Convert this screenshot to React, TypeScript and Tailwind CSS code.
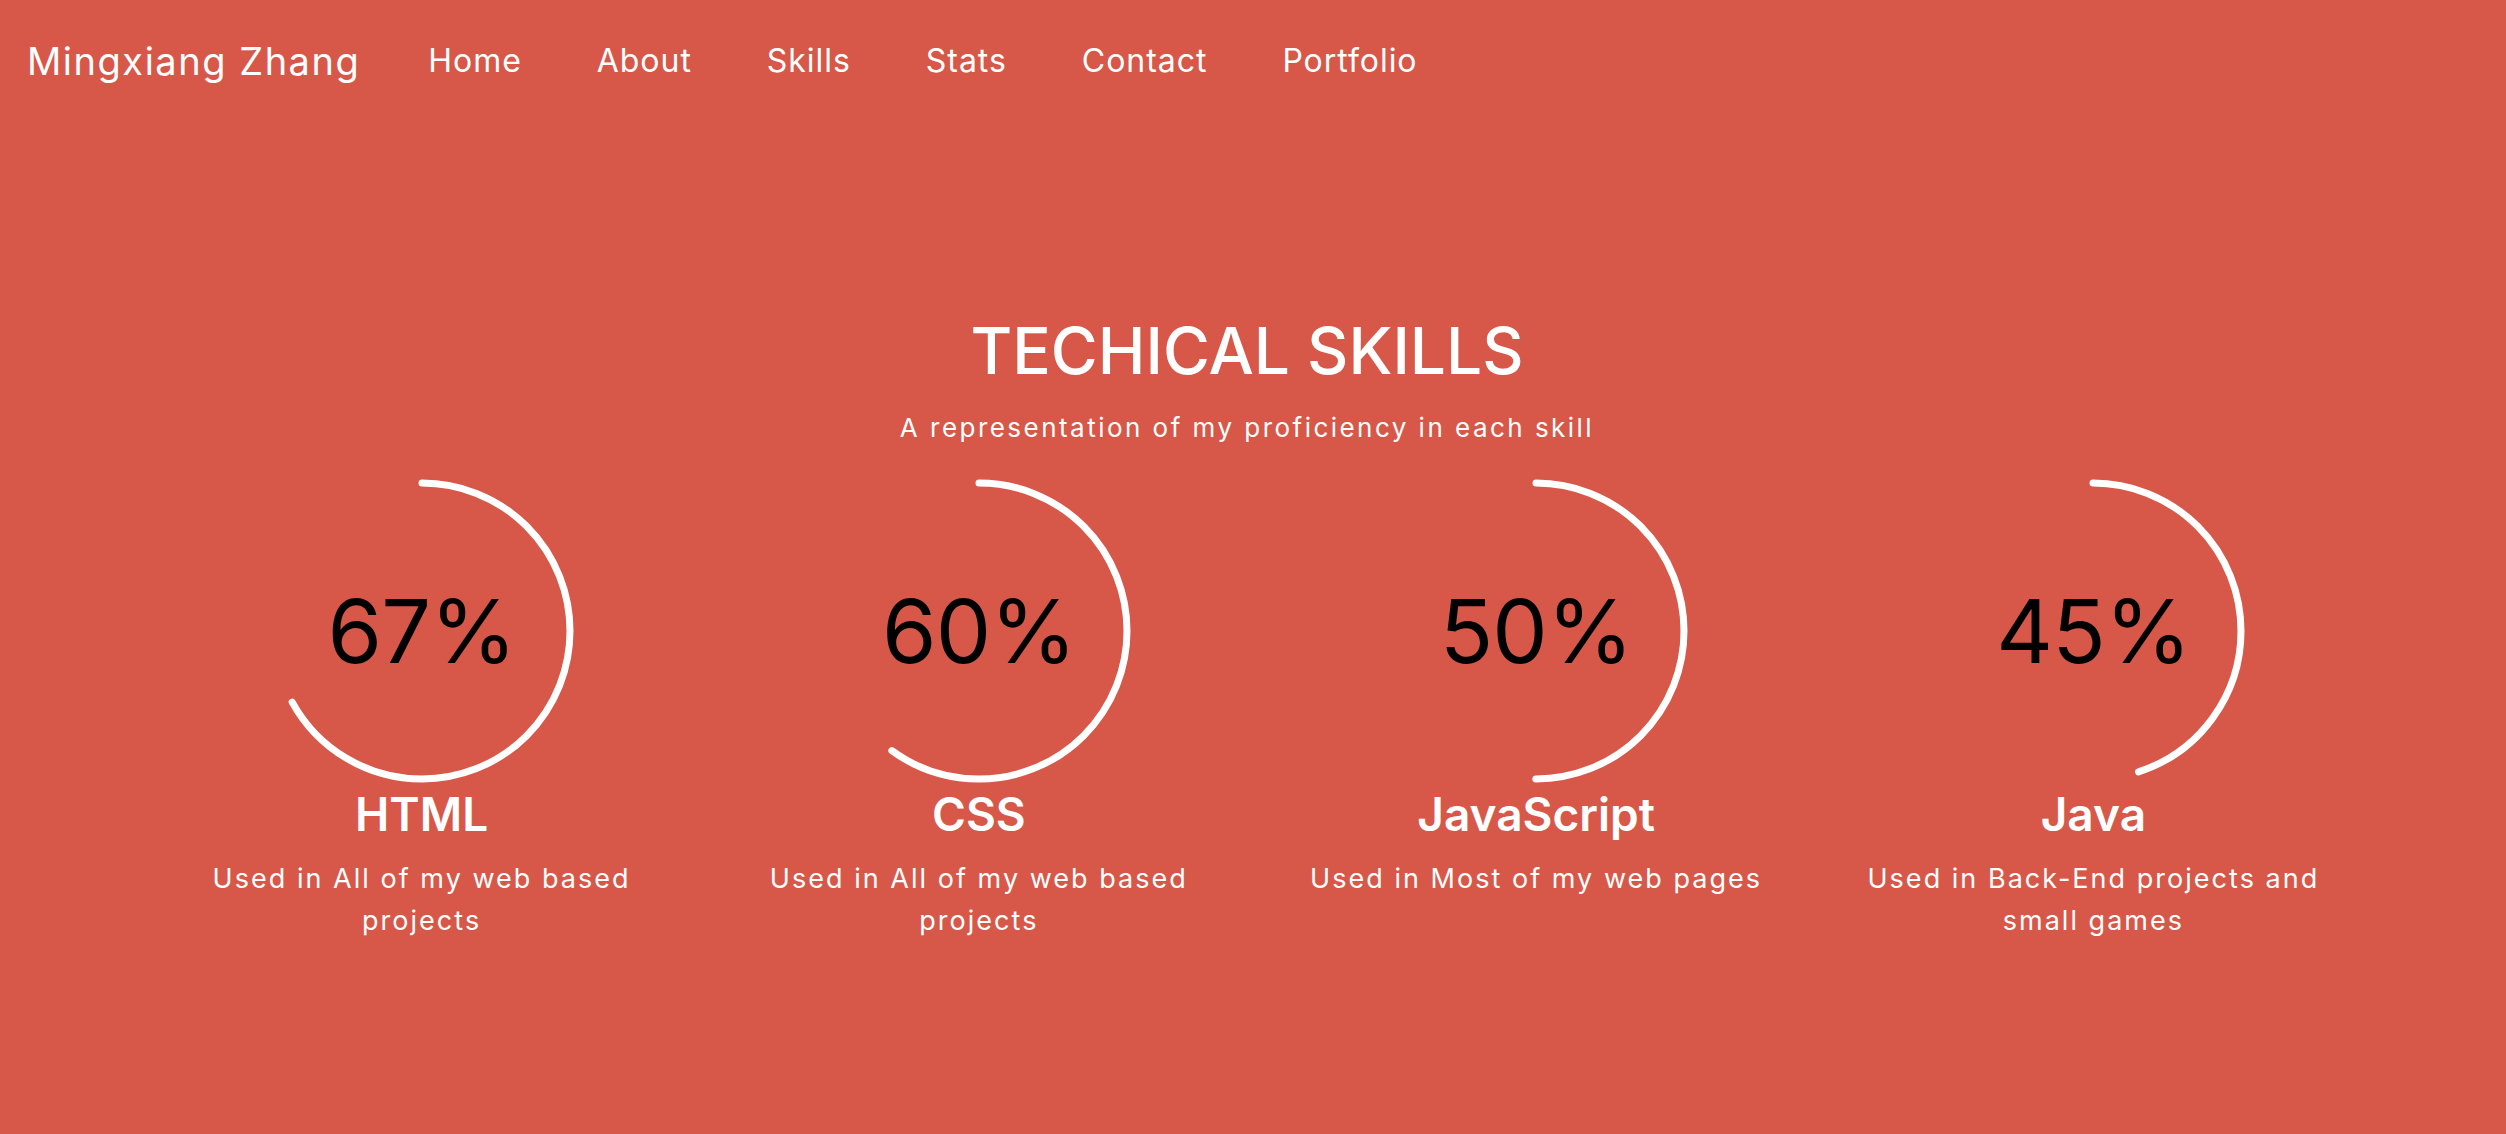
const skills = [
  { name: "HTML", percent: 67, desc: "Used in All of my web based projects" },
  { name: "CSS", percent: 60, desc: "Used in All of my web based projects" },
  { name: "JavaScript", percent: 50, desc: "Used in Most of my web pages" },
  { name: "Java", percent: 45, desc: "Used in Back-End projects and small games" },
];

const links = ["Home", "About", "Skills", "Stats", "Contact", "Portfolio"];

const R = 148;
const C = 2 * Math.PI * R;

function Ring({ percent }: { percent: number }) {
  return (
    <div className="relative w-[304px] h-[304px]">
      <svg width="304" height="304" viewBox="0 0 304 304" className="absolute inset-0">
        <circle
          cx="152"
          cy="152"
          r={R}
          fill="none"
          stroke="#ffffff"
          strokeWidth="7"
          strokeLinecap="round"
          strokeDasharray={`${(percent / 100) * C} ${C}`}
          transform="rotate(-90 152 152)"
        />
      </svg>
      <div className="absolute inset-0 flex items-center justify-center text-[88px] leading-none tracking-[-0.01em] text-black">
        {percent}%
      </div>
    </div>
  );
}

export default function App() {
  return (
    <div className="min-h-[1134px] w-full bg-[#d75848] text-white font-['Inter',sans-serif]">
      <nav className="h-[120px] flex items-center pl-[27px] pt-[2px]">
        <span className="text-[38px] tracking-[0.04em] mr-[68px]">Mingxiang Zhang</span>
        <ul className="flex items-center gap-[75px]">
          {links.map((l) => (
            <li key={l} className="text-[32px] tracking-[0.03em]">
              {l}
            </li>
          ))}
        </ul>
      </nav>

      <section className="pt-[199px]">
        <div className="pr-[12px]">
          <h1 className="text-center text-[64px] leading-none font-medium">TECHICAL SKILLS</h1>
          <p className="mt-[32px] text-center text-[26px] leading-none tracking-[0.095em]">
            A representation of my proficiency in each skill
          </p>
        </div>

        <div className="mt-[38px] grid grid-cols-4 pl-[143px] pr-[134px]">
          {skills.map((s) => (
            <div key={s.name} className="flex flex-col items-center px-[40px]">
              <Ring percent={s.percent} />
              <h2 className="mt-[8px] text-[46px] leading-none font-semibold">{s.name}</h2>
              <p className="mt-[21px] text-center text-[27px] leading-[42px] tracking-[0.075em]">
                {s.desc}
              </p>
            </div>
          ))}
        </div>
      </section>
    </div>
  );
}
